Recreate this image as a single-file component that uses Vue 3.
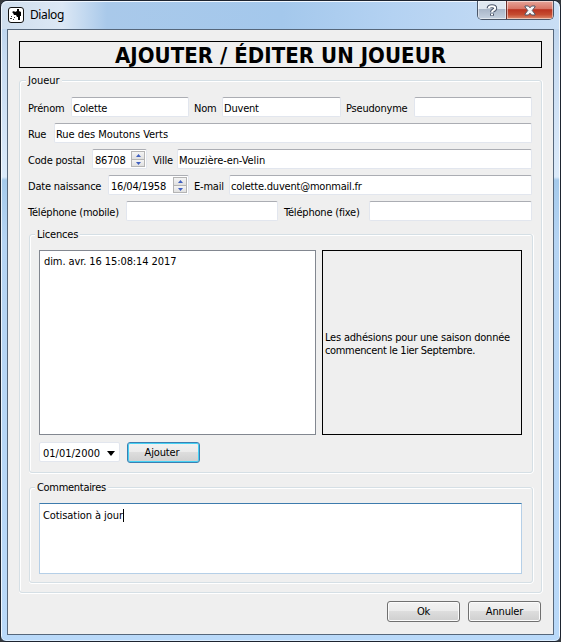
<script setup>
import { ref } from 'vue'

const rows = [
  {
    cols: '43px 118px 5px 28px 119px 5px 68px 118px',
    cells: [
      { label: 'Prénom', value: 'Colette', kind: 'text' },
      { label: 'Nom', value: 'Duvent', kind: 'text' },
      { label: 'Pseudonyme', value: '', kind: 'text' },
    ],
  },
  {
    cols: '26px 478px',
    cells: [{ label: 'Rue', value: 'Rue des Moutons Verts', kind: 'text street' }],
  },
  {
    cols: '64px 55px 6px 24px 355px',
    cells: [
      { label: 'Code postal', value: '86708', kind: 'spin' },
      { label: 'Ville', value: 'Mouzière-en-Velin', kind: 'text city' },
    ],
  },
  {
    cols: '80px 81px 5px 35px 303px',
    cells: [
      { label: 'Date naissance', value: '16/04/1958', kind: 'spin' },
      { label: 'E-mail', value: 'colette.duvent@monmail.fr', kind: 'text' },
    ],
  },
  {
    cols: '98px 152px 6px 85px 163px',
    cells: [
      { label: 'Téléphone (mobile)', value: '', kind: 'text' },
      { label: 'Téléphone (fixe)', value: '', kind: 'text' },
    ],
  },
]
const licences = ref(['dim. avr. 16 15:08:14 2017'])
</script>

<template>
  <div class="window">
    <header class="titlebar">
      <svg class="app-icon" width="16" height="16" viewBox="0 0 16 16">
        <rect x=".5" y=".5" width="15" height="15" rx="2.5" fill="#fff" stroke="#111" />
        <path d="M9 2h2v2l2 1v4h-1v4h-2v-3H9L8 8H6L5 6 4 5l2-1 1 1 2-1z" fill="#000" />
        <path d="M2 11h2v1H2zM3 9h1v1H3zM6 10h1v1H6zM5 12h1v1H5z" fill="#333" />
      </svg>
      <span class="caption">Dialog</span>
      <div class="sys">
        <div class="sys-btn help">
          <svg width="12" height="13" viewBox="0 0 12 13">
            <path d="M2.6 4.3Q2.6 2.2 6 2.2T9.2 4.2Q9.2 5.6 7.4 6.3 6 6.9 6 8.2M6 9.4v2.4" fill="none" stroke="#4c566b" stroke-width="4" />
            <path d="M2.8 4.3Q2.8 2.2 6 2.2T9.2 4.2Q9.2 5.6 7.4 6.3 6 6.9 6 8.2M6 9.7v1.6" fill="none" stroke="#fff" stroke-width="2" />
          </svg>
        </div>
        <div class="sys-btn close">
          <svg width="12" height="11" viewBox="0 0 12 11">
            <path d="M1 1h3.4L6 2.8 7.6 1H11v1L8.2 5.5 11 9v1H7.6L6 8.2 4.4 10H1V9l2.8-3.5L1 2z" fill="#f6f6f8" stroke="#535666" stroke-width="1" />
          </svg>
        </div>
      </div>
    </header>

    <main class="client">
      <h1 class="heading"><span>AJOUTER / ÉDITER UN JOUEUR</span></h1>

      <section class="group player">
        <span class="legend">Joueur</span>
        <div class="form">
          <div v-for="(row, i) in rows" :key="i" class="row" :style="{ gridTemplateColumns: row.cols }">
            <template v-for="(cell, j) in row.cells" :key="cell.label">
              <i v-if="j > 0"></i>
              <label>{{ cell.label }}</label>
              <div class="field" :class="cell.kind">
                <span>{{ cell.value }}</span>
                <div v-if="cell.kind === 'spin'" class="stepper">
                  <b><svg width="5" height="3"><path d="M0 3 2.5 0 5 3z" fill="#3f5fc0" /></svg></b>
                  <b><svg width="5" height="3"><path d="M0 0h5L2.5 3z" fill="#3f5fc0" /></svg></b>
                </div>
              </div>
            </template>
          </div>
        </div>

        <section class="group licences">
          <span class="legend">Licences</span>
          <div class="panes">
            <div class="list"><div v-for="l in licences" :key="l">{{ l }}</div></div>
            <div class="note"><p>Les adhésions pour une saison donnée<br /><span>commencent le 1ier Septembre.</span></p></div>
          </div>
          <div class="add">
            <div class="field combo">
              <span>01/01/2000</span>
              <svg width="8" height="5"><path d="M0 0h8L4 5z" fill="#000" /></svg>
            </div>
            <button class="btn default">Ajouter</button>
          </div>
        </section>

        <section class="group comments">
          <span class="legend">Commentaires</span>
          <div class="memo"><span>Cotisation à jour</span></div>
        </section>
      </section>

      <footer class="actions">
        <button class="btn">Ok</button>
        <button class="btn">Annuler</button>
      </footer>
    </main>
  </div>
</template>

<style>
body {
  background: #34383d;
  overflow: hidden;
}
</style>

<style scoped>
* {
  box-sizing: border-box;
}
.window {
  width: 561px;
  height: 642px;
  padding: 0 6px 6px;
  border: 1px solid #1d2430;
  border-radius: 7px 7px 6px 6px;
  background:
    linear-gradient(90deg, rgba(255, 255, 255, .75) 1px, transparent 1px calc(100% - 1px), rgba(255, 255, 255, .8) 0),
    linear-gradient(180deg, #b8d0ea 0, #c8dcf2 60px, #dbeafa 176px, #a5caeb 179px, #b5d4f3 240px, #b9d9f9 100%);
  box-shadow: inset 0 1px #eaf4ff, inset 0 -1px #dceeff;
  font: 11px/13px "DejaVu Sans Condensed", "DejaVu Sans", sans-serif;
  font-stretch: condensed;
  letter-spacing: -.2px;
  color: #000;
  white-space: nowrap;
}
.titlebar {
  display: flex;
  height: 28px;
  margin: 0 -5px;
  padding-left: 6px;
  background: linear-gradient(90deg, #cfdeee 0, #dce8f5 60px, #a9c9ea 105px, #a4c8ec 280px, #b4d2f2 390px, #c9def5 100%);
  border-radius: 6px 6px 0 0;
  box-shadow: inset 0 1px #f0f7ff;
}
.app-icon {
  margin-top: 6px;
}
.caption {
  margin: 7px 0 0 6px;
  font: 12px/14px "Noto Sans", sans-serif;
  letter-spacing: -.4px;
}
.sys {
  display: flex;
  height: 19px;
  margin: 0 5px 0 auto;
  border: 1px solid #4a5668;
  border-top: 0;
  border-radius: 0 0 5px 5px;
  overflow: hidden;
}
.sys-btn {
  display: grid;
  place-items: center;
  width: 28px;
  box-shadow: inset 0 0 0 1px rgba(255, 255, 255, .5);
}
.help {
  background: linear-gradient(#dfe7f0 0 45%, #a9b6c8 46%, #c5d1e0 100%);
}
.close {
  width: 47px;
  border-left: 1px solid #6b302c;
  background: linear-gradient(#e6a499 0, #d87465 44%, #ba3220 48%, #c54b30 75%, #de8b6e 100%);
}
.client {
  height: 606px;
  padding: 11px 11px 0;
  border: 1px solid #56677b;
  background: #efefef;
}
.heading {
  display: flex;
  justify-content: center;
  height: 27px;
  margin: 0;
  border: 1px solid #000;
  font: bold 22px/27px "DejaVu Sans Condensed", "DejaVu Sans", sans-serif;
  font-stretch: condensed;
  letter-spacing: .05px;
}
.group {
  border: 1px solid #d5dfe5;
  border-radius: 3px;
  box-shadow: inset 1px 1px #fff, 0 1px #fff, 1px 0 #fff;
}
.legend {
  display: block;
  width: max-content;
  height: 13px;
  margin-top: -7px;
  margin-left: 5px;
  padding: 0 2px;
  background: #efefef;
}
.player {
  height: 513px;
  margin-top: 12px;
  padding: 0 9px 0 8px;
}
.player > .legend {
  margin-left: -2px;
  letter-spacing: 0;
}
.form {
  display: grid;
  gap: 6px;
  margin-top: 10px;
}
.row {
  display: grid;
  height: 20px;
}
.row label {
  padding-top: 5px;
}
.field {
  display: flex;
  height: 20px;
  padding: 4px 1px 0;
  border: 1px solid #e2e6ee;
  border-top-color: #abadb3;
  border-radius: 2px;
  background: #fff;
}
.street {
  letter-spacing: -.05px;
}
.city {
  letter-spacing: -.08px;
}
.field.spin {
  justify-content: space-between;
  padding: 0 1px 0 2px;
}
.spin > span {
  padding-top: 4px;
}
.stepper {
  display: grid;
  grid-template-rows: 7px 8px;
  width: 14px;
  height: 16px;
  margin-top: 1px;
  border: 1px solid #b4b4b4;
  border-bottom: 0;
}
.stepper b {
  display: grid;
  place-items: center;
  background: linear-gradient(#f4f4f4, #e0e0e0);
}
.stepper b + b {
  border-top: 1px solid #b4b4b4;
  border-bottom: 1px solid #b4b4b4;
}
.licences {
  height: 239px;
  width: 504px;
  margin: 13px 0 0 1px;
  padding: 0 9px;
}
.licences .legend,
.comments .legend {
  margin-left: -4px;
}
.comments .legend {
  letter-spacing: -.3px;
}
.panes {
  display: grid;
  grid-template-columns: 277px 200px;
  gap: 6px;
  height: 185px;
  margin-top: 9px;
}
.list {
  padding: 4px;
  border: 1px solid #828790;
  background: #fff;
  letter-spacing: -.09px;
}
.note {
  display: flex;
  align-items: center;
  padding: 3px 2px 0;
  border: 1px solid #000;
}
.note p {
  margin: 0;
}
.note span {
  letter-spacing: -.34px;
}
.add {
  display: flex;
  gap: 7px;
  margin-top: 7px;
}
.combo {
  width: 81px;
  padding: 4px 4px 0 3px;
  justify-content: space-between;
  border-color: #e2e6ee;
  letter-spacing: 0;
}
.combo svg {
  margin-top: 4px;
}
.btn {
  width: 73px;
  height: 21px;
  padding: 0;
  border: 1px solid #707070;
  border-radius: 3px;
  background: linear-gradient(#f2f2f2 0, #ebebeb 48%, #dddddd 50%, #cfcfcf 100%);
  box-shadow: inset 0 0 0 1px #fbfbfb;
  font: inherit;
  letter-spacing: -.15px;
  color: #000;
}
.default {
  padding-right: 3px;
  border-color: #3c7fb1;
  box-shadow: inset 0 0 0 1px #46d1f4;
}
.comments {
  width: 504px;
  height: 96px;
  margin: 14px 0 0 1px;
  padding: 0 9px;
}
.memo {
  height: 71px;
  width: 483px;
  margin-top: 9px;
  padding: 5px 3px;
  border: 1px solid #b5cfe7;
  border-top-color: #3d7bad;
  background: #fff;
  letter-spacing: -.08px;
}
.memo span {
  display: inline-block;
  border-right: 1px solid #000;
}
.actions {
  display: flex;
  justify-content: flex-end;
  gap: 8px;
  margin-top: 8px;
  padding-right: 1px;
}
</style>
